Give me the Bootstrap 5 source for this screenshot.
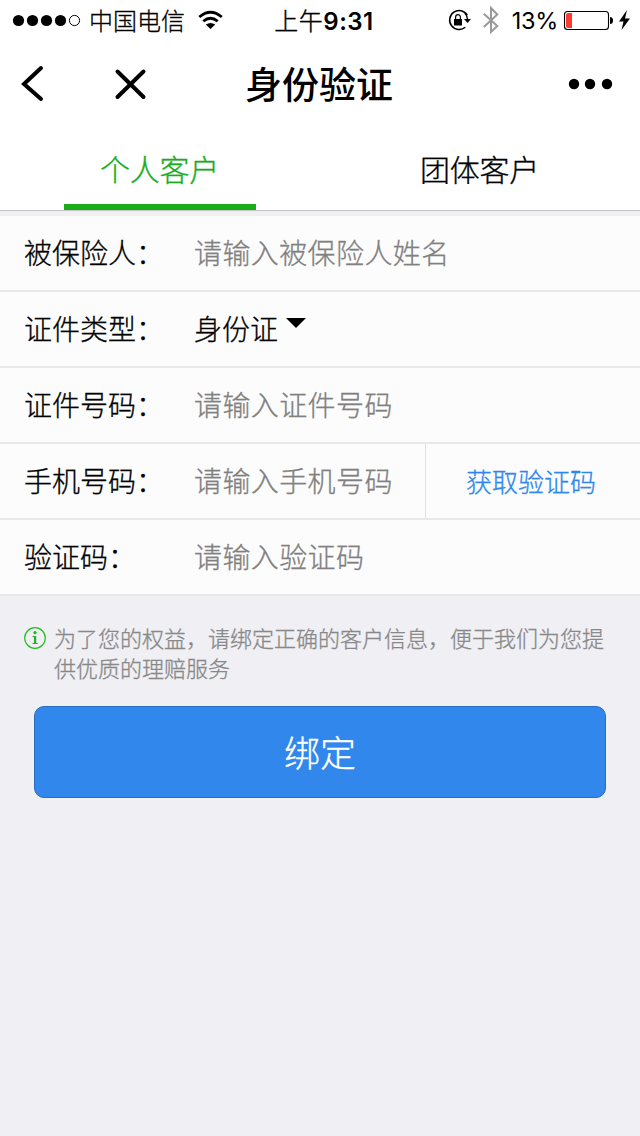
<!DOCTYPE html>
<html lang="zh-CN">
<head>
<meta charset="utf-8">
<meta name="viewport" content="width=device-width, initial-scale=1">
<title>身份验证</title>
<link href="https://cdn.jsdelivr.net/npm/bootstrap@5.3.0/dist/css/bootstrap.min.css" rel="stylesheet">
<style>
body{background:#efeff4;color:#000;font-family:"Noto Sans CJK SC",sans-serif;font-size:28px;font-weight:300;line-height:1.2;-webkit-text-stroke:.3px}
.status{height:40px;font-size:24px;line-height:40px}
.status .latin{font-family:Inter,sans-serif;-webkit-text-stroke:0}
.status .cjk{font-family:"Noto Sans CJK SC",sans-serif;font-weight:300;-webkit-text-stroke:.4px}
.clock{font-size:24px;letter-spacing:.5px;padding-left:8px}
.charge{font-size:23.500px;letter-spacing:-.3px;padding-top:2px}
.side{width:240px}
.topbar{height:88px}
.page-title{font-size:37px;font-weight:500;line-height:86px;padding-right:2px;-webkit-text-stroke:0}
.tabs{height:83px;border-bottom:1px solid #c4c4c6;margin-bottom:5px}
.tabs .nav-link{color:#000;font-size:30px;line-height:80px;height:82px;width:192px;padding:0 1px 0 0;letter-spacing:-.3px;border-bottom:6px solid transparent}
.tabs .nav-link.active{color:#1aad19;border-color:#1aad19}
.field{height:76px;background:#fcfcfc;border-bottom:2px solid #e8e8e9;padding-left:24px}
.field label{width:170px;line-height:72px}
.field input{background:none;border:0;padding:0 0 2px;height:74px;color:#000;min-width:0;letter-spacing:.4px}
.field input::placeholder{color:#808080;opacity:1}
.field .picker{line-height:72px;width:84px}
.code-btn{width:215px;border:0;border-left:1px solid #e0e0e2;background:none;color:#2f86ec;font-size:26px;font-weight:300;padding:0 4px 0 0;-webkit-text-stroke:.3px}
.notice{padding:27px 24px 0;color:#888;font-size:22px;line-height:30px}
.notice p{margin-top:-1px}
.submit{margin:24px 34px 0;width:572px;height:92px;background:#3187ec;border:1px solid #276dbf;border-radius:10px;color:#fff;font-size:36px;font-weight:300;padding:0 0 3px}
</style>
</head>
<body>
<header class="bg-white">
  <div class="status d-flex justify-content-between">
    <div class="side d-flex align-items-center">
      <svg width="89" height="40" viewBox="0 0 89 40"><circle cx="18.5" cy="20.5" r="5.6"/><circle cx="32.5" cy="20.5" r="5.6"/><circle cx="46.5" cy="20.5" r="5.6"/><circle cx="60.5" cy="20.5" r="5.6"/><circle cx="74.5" cy="20.5" r="5.1" fill="none" stroke="#000"/></svg>
      <span>中国电信</span>
      <svg width="40" height="40" viewBox="185 0 40 40" fill="none" stroke="#000" stroke-width="2.800"><path d="M199.300 17Q210.500 7.500 221.800 17"/><path d="M203.300 21.300Q210.500 15.200 217.700 21.300"/><path d="M205.800 24.500Q210.500 21.500 215.200 24.500L210.500 29Z" fill="#000" stroke="none"/></svg>
    </div>
    <div class="latin clock fw-semibold text-nowrap"><span class="cjk">上午</span>9:31</div>
    <div class="side d-flex justify-content-end align-items-center">
      <svg class="flex-shrink-0" width="60" height="40" viewBox="445 0 60 40" fill="none"><path d="M468.300 15.200A9.500 9.500 0 1 0 466.300 27.300" stroke="#000" stroke-width="1.500"/><path d="M465.800 13A9.500 9.500 0 0 1 468.500 19" stroke="#000" stroke-width="1.500"/><path d="M465 19H472L468.500 23Z" fill="#000"/><rect x="455" y="19" width="8" height="6.500" rx=".5" fill="#000"/><path d="M456.600 19V17a2.400 2.400 0 0 1 4.800 0v2" stroke="#000" stroke-width="1.200"/><path d="M484.800 13.800L498.300 26 492 32V8L498.300 14.500 484.800 27" stroke="#999" stroke-width="2"/></svg>
      <span class="latin charge fw-normal ms-2 lh-1">13%</span>
      <svg class="flex-shrink-0" width="82" height="40" viewBox="558 0 82 40"><rect x="564.500" y="11.500" width="44" height="18" rx="3" fill="none" stroke="#000" stroke-width="1.100"/><path d="M566 15q0-2 2-2h4v15h-4q-2 0-2-2z" fill="#ff3b30"/><path d="M610 17q3 0 3 3.500t-3 3.500z"/><path d="M627 10L619 21.500h4.500L621.500 30 630 18.500h-5z"/></svg>
    </div>
  </div>
  <div class="topbar d-flex justify-content-between">
    <svg class="side" height="88" viewBox="0 40 240 88" fill="none" stroke="#000" stroke-width="4" stroke-linecap="round"><path d="M41 68L24 84 41 99M117.500 71.500L143.500 97M143.500 71.500L117.500 97"/></svg>
    <h1 class="page-title m-0 text-nowrap">身份验证</h1>
    <svg class="side" height="88" viewBox="400 40 240 88"><circle cx="574" cy="84" r="5.200"/><circle cx="590" cy="84" r="5.200"/><circle cx="607" cy="84" r="5.200"/></svg>
  </div>
  <nav class="nav tabs">
    <div class="col-6 d-flex justify-content-center"><a class="nav-link active text-center" href="#">个人客户</a></div>
    <div class="col-6 d-flex justify-content-center"><a class="nav-link text-center" href="#">团体客户</a></div>
  </nav>
</header>
<form>
  <div class="field d-flex"><label class="flex-shrink-0" for="holder">被保险人：</label><input id="holder" class="flex-grow-1 fw-light" placeholder="请输入被保险人姓名"></div>
  <div class="field d-flex"><label class="flex-shrink-0">证件类型：</label><span class="picker">身份证</span><svg width="30" height="74" viewBox="278 292 30 74"><path d="M286 318H306L296 328Z"/></svg></div>
  <div class="field d-flex"><label class="flex-shrink-0" for="idno">证件号码：</label><input id="idno" class="flex-grow-1 fw-light" placeholder="请输入证件号码"></div>
  <div class="field d-flex"><label class="flex-shrink-0" for="phone">手机号码：</label><input id="phone" class="flex-grow-1 fw-light w-25" placeholder="请输入手机号码"><button type="button" class="code-btn flex-shrink-0">获取验证码</button></div>
  <div class="field d-flex"><label class="flex-shrink-0" for="code">验证码：</label><input id="code" class="flex-grow-1 fw-light" placeholder="请输入验证码"></div>
  <div class="notice d-flex">
    <svg class="flex-shrink-0" width="30" height="30" viewBox="24 623 30 30"><circle cx="35" cy="638" r="10.300" fill="none" stroke="#1fc21f" stroke-width="1.200"/><g fill="#1fb51f"><circle cx="35" cy="632.700" r="1.600"/><path d="M32.500 636h3.700v7h1.500v1h-5.200v-1h1.500v-6h-1.500z"/></g></svg>
    <p class="mb-0 text-nowrap">为了您的权益，请绑定正确的客户信息，便于我们为您提<br>供优质的理赔服务</p>
  </div>
  <button type="button" class="btn submit">绑定</button>
</form>
<script src="https://cdn.jsdelivr.net/npm/bootstrap@5.3.0/dist/js/bootstrap.bundle.min.js"></script>
</body>
</html>
